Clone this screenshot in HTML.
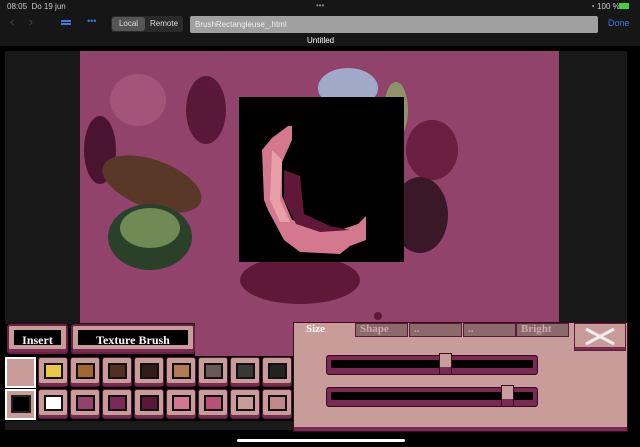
<!DOCTYPE html><html><head><style>
*{margin:0;padding:0;box-sizing:border-box}
body{width:640px;height:447px;background:#000;position:relative;overflow:hidden;font-family:"Liberation Sans",sans-serif}
.a{position:absolute}
.btn{position:absolute;background:#c89c98;border:2px solid #6a1f45;border-radius:3px;box-shadow:inset 0 -3px 0 #7a2a52}
.btn .in{position:absolute;left:5px;right:5px;top:4px;bottom:7px;background:#000;color:#fff;font:bold 12px "Liberation Serif",serif;text-align:center;line-height:20px}
.sw{position:absolute;width:30px;height:30px;background:#c89c98;border:1px solid #5a1a3a;border-radius:3px;box-shadow:inset 0 -3px 0 #7a2a52}
.sw i{position:absolute;left:5px;top:5px;width:19px;height:16px;border:2px solid #111}
.sl{position:absolute;left:326px;width:212px;height:20px;background:#7a2a52;border:1px solid #3a0a20;border-radius:3px}
.sl b{position:absolute;left:4px;right:4px;top:4px;height:8px;background:#000}
.kn{position:absolute;width:13px;height:22px;background:#c89c98;border:1px solid #3a0a20;box-shadow:inset 0 -7px 0 #7a2a52}
.tab{position:absolute;top:323px;height:14px;background:#8a6a6a;border:1px solid #5a1a3a;color:#c8a8a8;font:bold 11px "Liberation Serif",serif;padding-left:4px;line-height:11px}
</style></head><body>
<div class="a" style="left:0;top:0;width:640px;height:46px;background:#161616"></div>
<div class="a" style="left:7px;top:2px;color:#ccc;font-size:8px">08:05&nbsp; Do 19 jun</div>
<div class="a" style="left:316px;top:1px;color:#888;font-size:8px">•••</div>
<div class="a" style="left:590px;top:2px;color:#ccc;font-size:8px">◔ 100 %</div>
<div class="a" style="left:619px;top:3px;width:10px;height:6px;background:#4c4"></div>
<div class="a" style="left:10px;top:14px;color:#444;font-size:13px">‹&nbsp;&nbsp;&nbsp;&nbsp;›</div>
<div class="a" style="left:61px;top:20px;width:10px;height:2px;background:#3a7ae0;box-shadow:0 3px 0 #3a7ae0"></div>
<div class="a" style="left:87px;top:16px;color:#3a7ae0;font-size:9px">•••</div>
<div class="a" style="left:111px;top:16px;width:72px;height:16px;background:#2a2a2a;border-radius:3px"></div>
<div class="a" style="left:112px;top:17px;width:33px;height:14px;background:#555;border-radius:3px;color:#ddd;font-size:8px;text-align:center;line-height:14px">Local</div>
<div class="a" style="left:150px;top:17px;color:#ddd;font-size:8px;line-height:14px">Remote</div>
<div class="a" style="left:190px;top:16px;width:408px;height:17px;background:#a0a0a0;border-radius:2px;color:#eee;font-size:8px;line-height:17px;padding-left:5px">BrushRectangleuse_.html</div>
<div class="a" style="left:608px;top:18px;color:#3a7ae0;font-size:9px">Done</div>
<div class="a" style="left:307px;top:36px;color:#fff;font-size:8px">Untitled</div>
<div class="a" style="left:5px;top:51px;width:622px;height:273px;background:#181818"></div>
<div class="a" style="left:195px;top:320px;width:100px;height:36px;background:#91436b"></div>
<svg class="a" style="left:80px;top:51px" width="479" height="272" viewBox="80 51 479 272">
<rect x="80" y="51" width="479" height="272" fill="#91436b"/>
<ellipse cx="138" cy="100" rx="28" ry="26" fill="#b06080" opacity=".6"/>
<ellipse cx="206" cy="110" rx="20" ry="34" fill="#5a1838"/>
<ellipse cx="100" cy="150" rx="16" ry="34" fill="#4a1430"/>
<ellipse cx="152" cy="184" rx="52" ry="24" fill="#5a3828" transform="rotate(20 152 184)"/>
<ellipse cx="150" cy="237" rx="42" ry="33" fill="#2a4028"/>
<ellipse cx="150" cy="228" rx="30" ry="20" fill="#90a868" opacity=".7"/>
<ellipse cx="348" cy="88" rx="30" ry="20" fill="#a0aac8"/>
<ellipse cx="396" cy="110" rx="12" ry="28" fill="#90a868" opacity=".8"/>
<ellipse cx="432" cy="150" rx="26" ry="30" fill="#6a1e40"/>
<ellipse cx="420" cy="215" rx="28" ry="38" fill="#3a1828"/>
<ellipse cx="300" cy="280" rx="60" ry="24" fill="#601838"/>
<circle cx="378" cy="316" r="4" fill="#601838"/>
</svg>
<div class="a" style="left:239px;top:97px;width:165px;height:165px;background:#000"></div>
<svg class="a" style="left:239px;top:97px" width="165" height="165" viewBox="239 97 165 165">
<path d="M288 126 L292 126 L292 140 L282 162 L282 196 L292 220 L340 230 L358 224 L366 216 L366 240 L350 246 L340 254 L300 252 L284 240 L268 210 L264 200 L262 150 L272 138 Z" fill="#d47890"/>
<path d="M284 170 L300 176 L304 214 L330 226 L350 230 L320 232 L296 224 L284 200 Z" fill="#601838"/>
<path d="M272 150 L282 160 L280 200 L290 222 L280 222 L270 200 Z" fill="#e8a0a8"/>
</svg>
<div class="btn" style="left:7px;top:324px;width:61px;height:30px"><div class="in">Insert</div></div>
<div class="btn" style="left:71px;top:324px;width:124px;height:30px"><div class="in">Texture Brush</div></div>
<div class="a" style="left:5px;top:357px;width:31px;height:31px;border:2px solid #fff;background:#c89c98"></div>
<div class="a" style="left:5px;top:389px;width:31px;height:31px;border:2px solid #fff;background:#c89c98"><i class="a" style="left:4px;top:4px;width:20px;height:18px;background:#000;border:2px solid #222"></i></div>
<div class="sw" style="left:38px;top:357px"><i style="background:#e8c848"></i></div>
<div class="sw" style="left:70px;top:357px"><i style="background:#a06830"></i></div>
<div class="sw" style="left:102px;top:357px"><i style="background:#503020"></i></div>
<div class="sw" style="left:134px;top:357px"><i style="background:#301c14"></i></div>
<div class="sw" style="left:166px;top:357px"><i style="background:#b07c58"></i></div>
<div class="sw" style="left:198px;top:357px"><i style="background:#6a5852"></i></div>
<div class="sw" style="left:230px;top:357px"><i style="background:#383838"></i></div>
<div class="sw" style="left:262px;top:357px"><i style="background:#222"></i></div>
<div class="sw" style="left:38px;top:389px"><i style="background:#fff"></i></div>
<div class="sw" style="left:70px;top:389px"><i style="background:#91436b"></i></div>
<div class="sw" style="left:102px;top:389px"><i style="background:#7a2a58"></i></div>
<div class="sw" style="left:134px;top:389px"><i style="background:#5a1838"></i></div>
<div class="sw" style="left:166px;top:389px"><i style="background:#d07890"></i></div>
<div class="sw" style="left:198px;top:389px"><i style="background:#b85078"></i></div>
<div class="sw" style="left:230px;top:389px"><i style="background:#c89c98"></i></div>
<div class="sw" style="left:262px;top:389px"><i style="background:#c08888"></i></div>
<div class="a" style="left:5px;top:421px;width:290px;height:9px;background:#1a1a1a"></div>
<div class="a" style="left:293px;top:322px;width:335px;height:110px;background:#c89c98;border:1px solid #3a0a20;box-shadow:inset 0 -4px 0 #7a2a52"></div>
<div class="a" style="left:306px;top:323px;color:#fff;font:bold 11px 'Liberation Serif',serif">Size</div>
<div class="tab" style="left:355px;width:53px">Shape</div>
<div class="tab" style="left:409px;width:53px">..</div>
<div class="tab" style="left:463px;width:53px">..</div>
<div class="tab" style="left:516px;width:53px">Bright</div>
<div class="a" style="left:574px;top:323px;width:52px;height:28px;background:#c89c98;border:1px solid #5a1a3a;box-shadow:inset 0 -3px 0 #7a2a52"></div>
<svg class="a" style="left:584px;top:327px" width="32" height="20"><path d="M2 2L30 17M30 2L2 17" stroke="#eee" stroke-width="3"/></svg>
<div class="sl" style="top:355px"><b></b></div>
<div class="kn" style="left:439px;top:353px"></div>
<div class="sl" style="top:387px"><b></b></div>
<div class="kn" style="left:501px;top:385px"></div>
<div class="a" style="left:237px;top:439px;width:168px;height:3px;background:#fff;border-radius:2px"></div>
</body></html>
